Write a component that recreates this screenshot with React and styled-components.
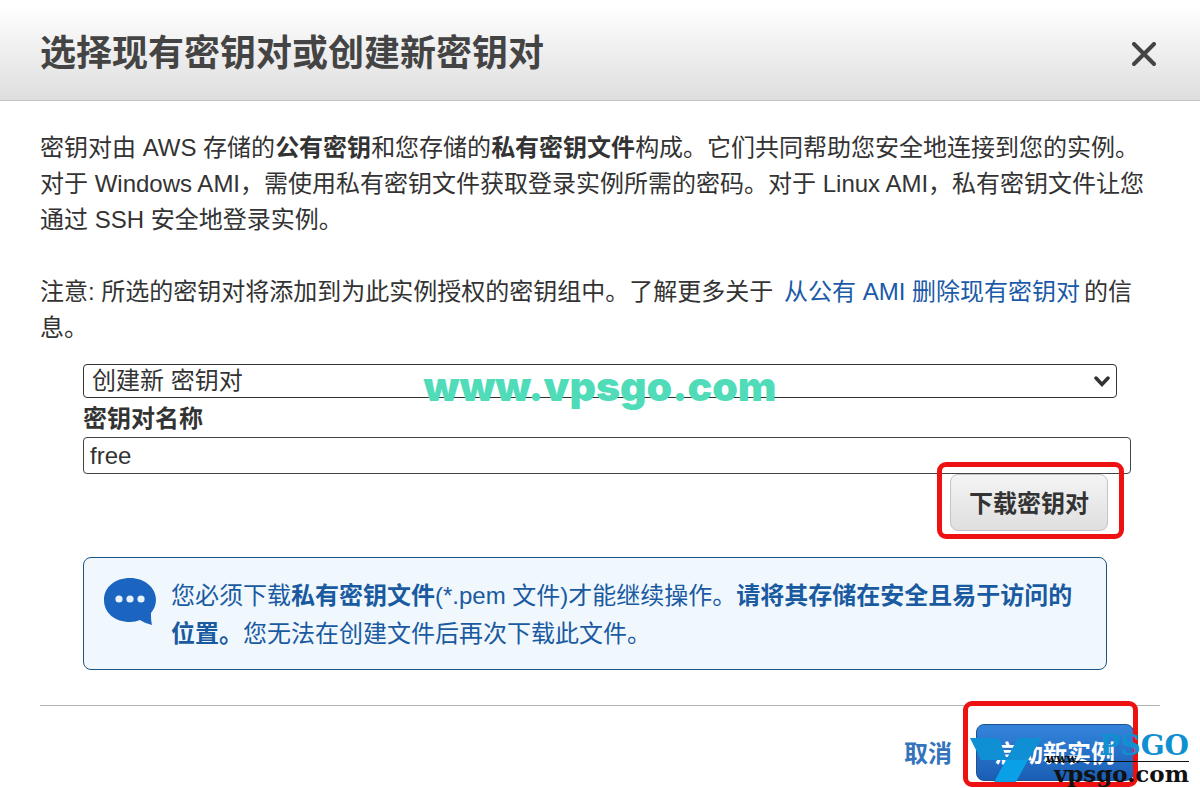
import React, { useState } from "react";
import styled, { createGlobalStyle, css } from "styled-components";

const GlobalStyle = createGlobalStyle`
  *,
  *::before,
  *::after {
    box-sizing: border-box;
  }

  body {
    margin: 0;
    background-color: #fff;
    color: #333;
    font-family: "Liberation Sans", "Noto Sans CJK SC", sans-serif;
    font-size: 24px;
    line-height: 36px;
  }

  button,
  input,
  select {
    color: inherit;
    font: inherit;
  }
`;

const Header = styled.header`
  display: flex;
  justify-content: space-between;
  align-items: center;
  padding: 28px 40px 20px;
  background-image: linear-gradient(#fff 5%, #dedede);
  border-bottom: 1px solid #c4c4c4;
`;

const Title = styled.h1`
  margin: 0;
  color: #444;
  font-size: 36px;
  font-weight: 700;
  line-height: 52px;
`;

const CloseButton = styled.button`
  display: flex;
  padding: 4px;
  background: none;
  border: 0;
  color: #444;
  cursor: pointer;
`;

const Content = styled.main`
  padding: 29px 40px 0;
`;

const Paragraph = styled.p`
  margin: 0 0 36px;

  &:last-of-type {
    margin-bottom: 18px;
  }
`;

const Link = styled.a`
  padding: 0 4px;
  color: #1a5aa8;
  text-decoration: none;
`;

const Form = styled.form`
  display: flex;
  flex-direction: column;
  padding-left: 43px;
`;

const SelectWrapper = styled.div`
  position: relative;
  margin-right: 43px;
`;

const Select = styled.select`
  display: block;
  width: 100%;
  height: 34px;
  padding: 0 32px 0 8px;
  appearance: none;
  background-color: #fff;
  border: 1px solid #333;
  border-radius: 4px;
  line-height: 32px;
`;

const Chevron = styled.svg`
  position: absolute;
  top: 11px;
  right: 7px;
  pointer-events: none;
`;

const SiteMark = styled.span`
  position: absolute;
  top: 0;
  left: 0;
  right: 0;
  color: #50dcb9;
  font-family: Inter, "DejaVu Sans", sans-serif;
  font-size: 41px;
  font-weight: 900;
  line-height: 44px;
  text-align: center;
  pointer-events: none;
`;

const Label = styled.label`
  padding-top: 3px;
  font-weight: 700;
`;

const Input = styled.input`
  height: 37px;
  margin-right: 29px;
  padding: 0 6px;
  background-color: #fff;
  border: 1px solid #444;
  border-radius: 4px;
`;

const Highlight = styled.div`
  position: relative;

  &::after {
    content: "";
    position: absolute;
    inset: ${(props) => props.$inset};
    border: 5px solid #ee1111;
    border-radius: 9px;
    pointer-events: none;
  }
`;

const Button = styled.button`
  display: block;
  padding: 11px 18px 8px;
  border: 1px solid #c4c4c4;
  border-radius: 8px;
  background-image: linear-gradient(#f4f4f4, #dfdfdf);
  font-weight: 700;
  cursor: pointer;

  ${(props) =>
    props.$primary &&
    css`
      background-image: linear-gradient(#3484dc, #1a5eb4);
      border-color: #1d5192;
      color: #fff;
    `}
`;

const DownloadRow = styled.div`
  display: flex;
  justify-content: flex-end;
  margin-right: 52px;
`;

const Notice = styled.div`
  display: flex;
  align-items: flex-start;
  gap: 14px;
  margin: 26px 53px 35px 0;
  padding: 19px 19px 16px;
  background-color: #f0f8fe;
  border: 1px solid #1c5583;
  border-radius: 8px;
  color: #1a5aa0;
  line-height: 38px;
`;

const NoticeIcon = styled.svg`
  flex: none;
`;

const Footer = styled.footer`
  position: relative;
  display: flex;
  justify-content: flex-end;
  align-items: center;
  gap: 24px;
  margin: 0 40px;
  padding: 18px 26px 6px 0;
  border-top: 1px solid #b4b4b4;
`;

const CancelButton = styled.button`
  padding: 2px 0 0;
  background: none;
  border: 0;
  color: #3574bd;
  font-weight: 700;
  cursor: pointer;
`;

const Logo = styled.div`
  position: absolute;
  right: -29px;
  bottom: 1px;
  display: flex;
  align-items: flex-end;
  pointer-events: none;
`;

const LogoMark = styled.svg`
  margin-bottom: 4px;
`;

const LogoText = styled.div`
  display: flex;
  flex-direction: column;
  align-items: flex-end;
  padding-left: 4px;
  font-family: "DejaVu Serif", serif;
  font-weight: 700;
`;

const LogoName = styled.span`
  color: #1090d0;
  font-size: 28px;
  line-height: 22px;
`;

const LogoPrefix = styled.span`
  align-self: stretch;
  border-bottom: 1px solid #111;
  color: #111;
  font-size: 12px;
  line-height: 4px;
`;

const LogoDomain = styled.span`
  padding-left: 8px;
  color: #111;
  font-size: 23px;
  line-height: 24px;
`;

const App = () => {
  const [keyPairName, setKeyPairName] = useState("free");

  const preventSubmit = (e) => {
    e.preventDefault();
  };

  return (
    <>
      <GlobalStyle />
      <Header>
        <Title>选择现有密钥对或创建新密钥对</Title>
        <CloseButton type="button" aria-label="关闭">
          <svg width="24" height="24" viewBox="0 0 24 24">
            <path
              d="M2 2 22 22M22 2 2 22"
              fill="none"
              stroke="currentColor"
              strokeWidth="4"
              strokeLinecap="round"
            />
          </svg>
        </CloseButton>
      </Header>
      <Content>
        <Paragraph>
          密钥对由 AWS 存储的<strong>公有密钥</strong>和您存储的
          <strong>私有密钥文件</strong>
          构成。它们共同帮助您安全地连接到您的实例。对于 Windows
          AMI，需使用私有密钥文件获取登录实例所需的密码。对于 Linux
          AMI，私有密钥文件让您通过 SSH 安全地登录实例。
        </Paragraph>
        <Paragraph>
          注意: 所选的密钥对将添加到为此实例授权的密钥组中。了解更多关于{" "}
          <Link href="#remove">从公有 AMI 删除现有密钥对</Link>的信息。
        </Paragraph>
        <Form onSubmit={preventSubmit}>
          <SelectWrapper>
            <Select aria-label="密钥对选项">
              <option>创建新 密钥对</option>
            </Select>
            <Chevron width="16" height="13" viewBox="0 0 16 13">
              <path
                d="M2 3 8 9.5 14 3"
                fill="none"
                stroke="#333"
                strokeWidth="3.5"
                strokeLinecap="round"
              />
            </Chevron>
            <SiteMark>www.vpsgo.com</SiteMark>
          </SelectWrapper>
          <Label htmlFor="key-pair-name">密钥对名称</Label>
          <Input
            id="key-pair-name"
            value={keyPairName}
            onChange={(e) => setKeyPairName(e.target.value)}
          />
          <DownloadRow>
            <Highlight $inset="-12px -16px -8px -13px">
              <Button type="button">下载密钥对</Button>
            </Highlight>
          </DownloadRow>
          <Notice>
            <NoticeIcon width="54" height="50" viewBox="0 0 54 50">
              <path
                d="M27 1C12 1 1 10 1 23s11 22 26 22c4 0 7-1 10-2 3 2 8 4 12 5-1-4-1-8-1-12 3-4 5-8 5-13C53 10 41 1 27 1Z"
                fill="#1b65c1"
              />
              <circle cx="16" cy="22" r="3.6" fill="#e6f3ff" />
              <circle cx="27" cy="22" r="3.6" fill="#e6f3ff" />
              <circle cx="38" cy="22" r="3.6" fill="#e6f3ff" />
            </NoticeIcon>
            <div>
              您必须下载<strong>私有密钥文件</strong>(*.pem
              文件)才能继续操作。
              <strong>请将其存储在安全且易于访问的位置。</strong>
              您无法在创建文件后再次下载此文件。
            </div>
          </Notice>
        </Form>
      </Content>
      <Footer>
        <CancelButton type="button">取消</CancelButton>
        <Highlight $inset="-23px -4px -6px -13px">
          <Button type="button" $primary>
            启动新实例
          </Button>
        </Highlight>
        <Logo>
          <LogoMark width="72" height="44" viewBox="0 0 72 44">
            <path d="M0 0H29L37 22H11Z" fill="#1090d4" />
            <path d="M48 0H72L58 22H36Z" fill="#1090d4" />
            <path d="M36 22H58L46 44H24Z" fill="#0aa0e8" />
          </LogoMark>
          <LogoText>
            <LogoName>PSGO</LogoName>
            <LogoPrefix>www.</LogoPrefix>
            <LogoDomain>vpsgo.com</LogoDomain>
          </LogoText>
        </Logo>
      </Footer>
    </>
  );
};

export default App;
